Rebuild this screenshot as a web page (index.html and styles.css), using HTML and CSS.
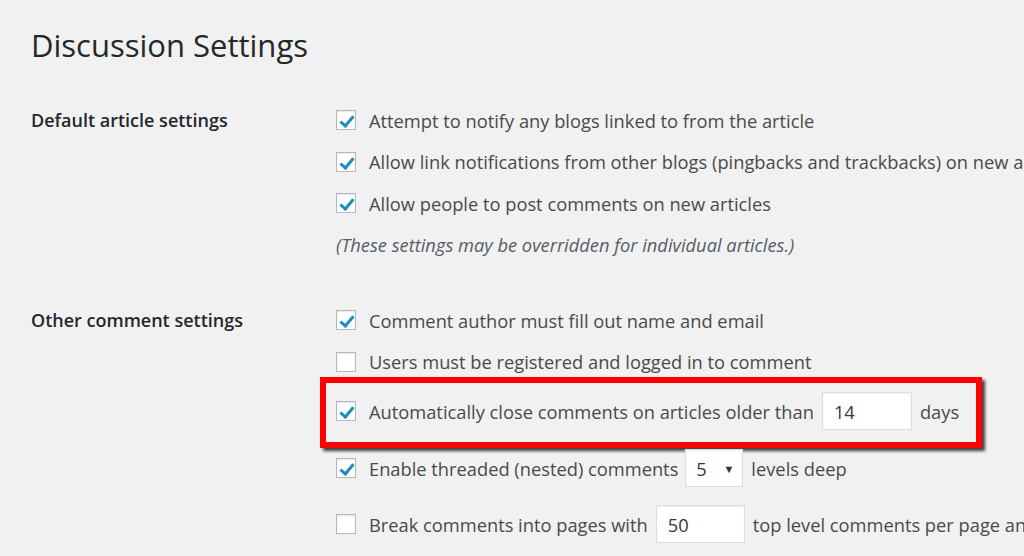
FILE: index.html
```html
<!DOCTYPE html>
<html>
<head>
    <title>Discussion Settings</title>
    <link rel="stylesheet" href="styles.css">
</head>
<body>
    <div class="wrap">
        <h1>Discussion Settings</h1>

        <div class="section">
            <div class="section-label">Default article settings</div>
            <div class="section-body">
                <label class="row"><span class="check on"></span>Attempt to notify any blogs linked to from the article</label>
                <label class="row"><span class="check on"></span>Allow link notifications from other blogs (pingbacks and trackbacks) on new articles</label>
                <label class="row"><span class="check on"></span>Allow people to post comments on new articles</label>
                <p class="note">(These settings may be overridden for individual articles.)</p>
            </div>
        </div>

        <div class="section second">
            <div class="section-label">Other comment settings</div>
            <div class="section-body">
                <label class="row"><span class="check on"></span>Comment author must fill out name and email</label>
                <label class="row"><span class="check"></span>Users must be registered and logged in to comment</label>
                <div class="highlight">
                    <label class="row"><span class="check on"></span>Automatically close comments on articles older than <span class="field days">14</span> days</label>
                </div>
                <label class="row threaded"><span class="check on"></span>Enable threaded (nested) comments <span class="field select">5 <span class="arrow">&#9660;</span></span> levels deep</label>
                <label class="row paged"><span class="check"></span>Break comments into pages with <span class="field pages">50</span> top level comments per page and the first page displayed by default</label>
            </div>
        </div>
    </div>
</body>
</html>
```

FILE: styles.css
```css
body {
    margin: 0;
    background-color: #f1f1f1;
    font-family: "Open Sans", "Noto Sans", sans-serif;
    color: #4a4a4a;
    overflow: hidden;
}

.wrap {
    padding: 25px 0 0 32px;
    width: 1400px;
}

h1 {
    font-size: 31px;
    font-weight: 400;
    color: #23282d;
    margin: 0 0 39px -1px;
    line-height: 40px;
}

.section {
    display: flex;
}

.second {
    margin-top: 43px;
}

.section-label {
    width: 305px;
    margin-left: -1px;
    font-size: 18px;
    font-weight: 600;
    color: #23282d;
    line-height: 32px;
    flex-shrink: 0;
}

.section-body {
    display: flex;
    flex-direction: column;
}

.row {
    display: flex;
    align-items: center;
    height: 32px;
    margin-bottom: 9.7px;
    font-size: 18.3px;
    white-space: nowrap;
}

.check {
    width: 20px;
    height: 20px;
    box-sizing: border-box;
    border: 1px solid #b4b9be;
    background-color: #ffffff;
    box-shadow: inset 0 1px 2px rgba(0, 0, 0, 0.1);
    margin-right: 13px;
    position: relative;
    flex-shrink: 0;
}

.check.on::after {
    content: "";
    position: absolute;
    left: 6px;
    top: 2px;
    width: 5px;
    height: 11px;
    border-right: 3px solid #1e8cbe;
    border-bottom: 3px solid #1e8cbe;
    transform: rotate(40deg);
}

.note {
    margin: 0;
    height: 32px;
    line-height: 32px;
    font-size: 18.3px;
    font-style: italic;
    color: #555d66;
    white-space: nowrap;
}

.highlight {
    margin: -10px 0 1px -16px;
    padding: 9px 0 12px 10px;
    width: 662px;
    box-sizing: border-box;
    border: 6px solid #ff0000;
    box-shadow: 3px 3px 3px rgba(0, 0, 0, 0.75);
}

.highlight .row {
    margin-bottom: 0;
    height: 38px;
}

.field {
    display: inline-flex;
    align-items: center;
    background-color: #ffffff;
    border: 1px solid #dddddd;
    box-shadow: inset 0 1px 2px rgba(0, 0, 0, 0.07);
    height: 38px;
    box-sizing: border-box;
    padding: 0 11px;
    margin: 0 8px 0 8px;
    color: #32373c;
}

.days {
    width: 90px;
}

.select {
    width: 58px;
    justify-content: space-between;
    padding: 0 8px 0 10px;
    margin-left: 7px;
}

.arrow {
    font-size: 11px;
    color: #333333;
}

.pages {
    width: 89px;
}

.threaded {
    height: 38px;
    margin-bottom: 18px;
}

.paged {
    height: 38px;
}
```
